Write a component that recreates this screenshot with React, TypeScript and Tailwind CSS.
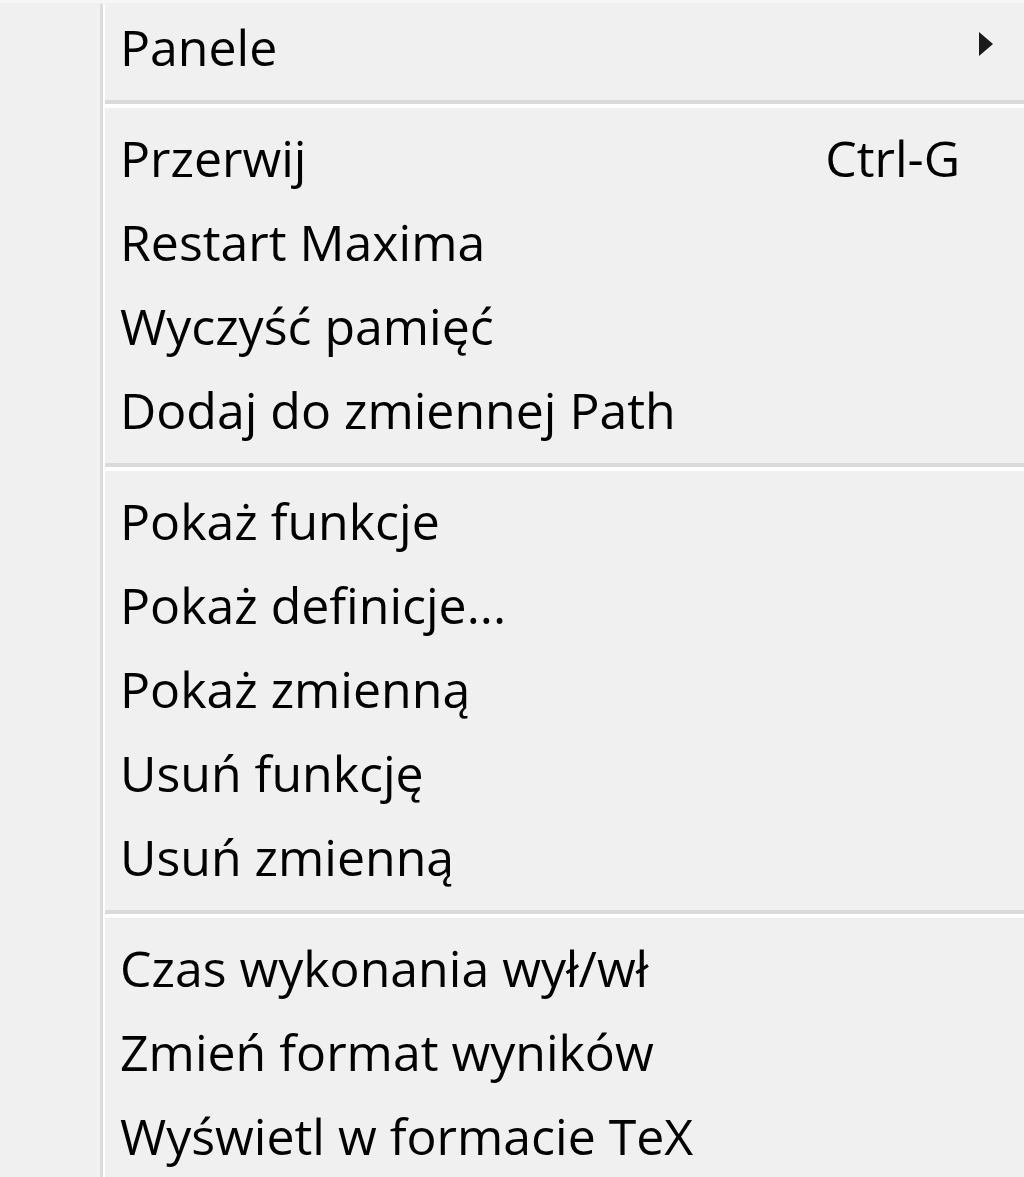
type Item = { label: string; shortcut?: string; submenu?: boolean } | "sep";

const ITEMS: Item[] = [
  { label: "Panele", submenu: true },
  "sep",
  { label: "Przerwij", shortcut: "Ctrl-G" },
  { label: "Restart Maxima" },
  { label: "Wyczyść pamięć" },
  { label: "Dodaj do zmiennej Path" },
  "sep",
  { label: "Pokaż funkcje" },
  { label: "Pokaż definicje..." },
  { label: "Pokaż zmienną" },
  { label: "Usuń funkcję" },
  { label: "Usuń zmienną" },
  "sep",
  { label: "Czas wykonania wył/wł" },
  { label: "Zmień format wyników" },
  { label: "Wyświetl w formacie TeX" },
];

function Separator() {
  return (
    <div className="pt-[10.5px] pb-[8.5px] pl-[105px]">
      <div className="h-[4px] bg-[#dadada]" />
      <div className="h-[4px] bg-white" />
    </div>
  );
}

export default function App() {
  return (
    <div
      className="relative w-[1024px] h-[1177px] overflow-hidden bg-[#f0f0f0] text-black"
      style={{ fontFamily: '"Open Sans", "Noto Sans", sans-serif' }}
    >
      <div className="h-[3px] bg-[#f6f6f6]" />
      {/* gutter line */}
      <div className="absolute left-[100px] top-[4px] bottom-0 flex">
        <div className="w-[3px] bg-[#dcdcdc]" />
        <div className="w-[2px] bg-white" />
      </div>
      <div className="pt-[2px]">
        {ITEMS.map((it, i) =>
          it === "sep" ? (
            <Separator key={i} />
          ) : (
            <div key={i} className="flex items-center h-[84px] pl-[120px] pr-[31px] text-[50px] leading-[84px]">
              <span className="flex-1 whitespace-nowrap">{it.label}</span>
              {it.shortcut && <span className="mr-[33px] whitespace-nowrap">{it.shortcut}</span>}
              {it.submenu && (
                <svg width="14" height="24" viewBox="0 0 14 24" className="mt-[-6px]">
                  <path d="M0 0 L14 12 L0 24 Z" fill="#1a1a1a" />
                </svg>
              )}
            </div>
          )
        )}
      </div>
    </div>
  );
}
